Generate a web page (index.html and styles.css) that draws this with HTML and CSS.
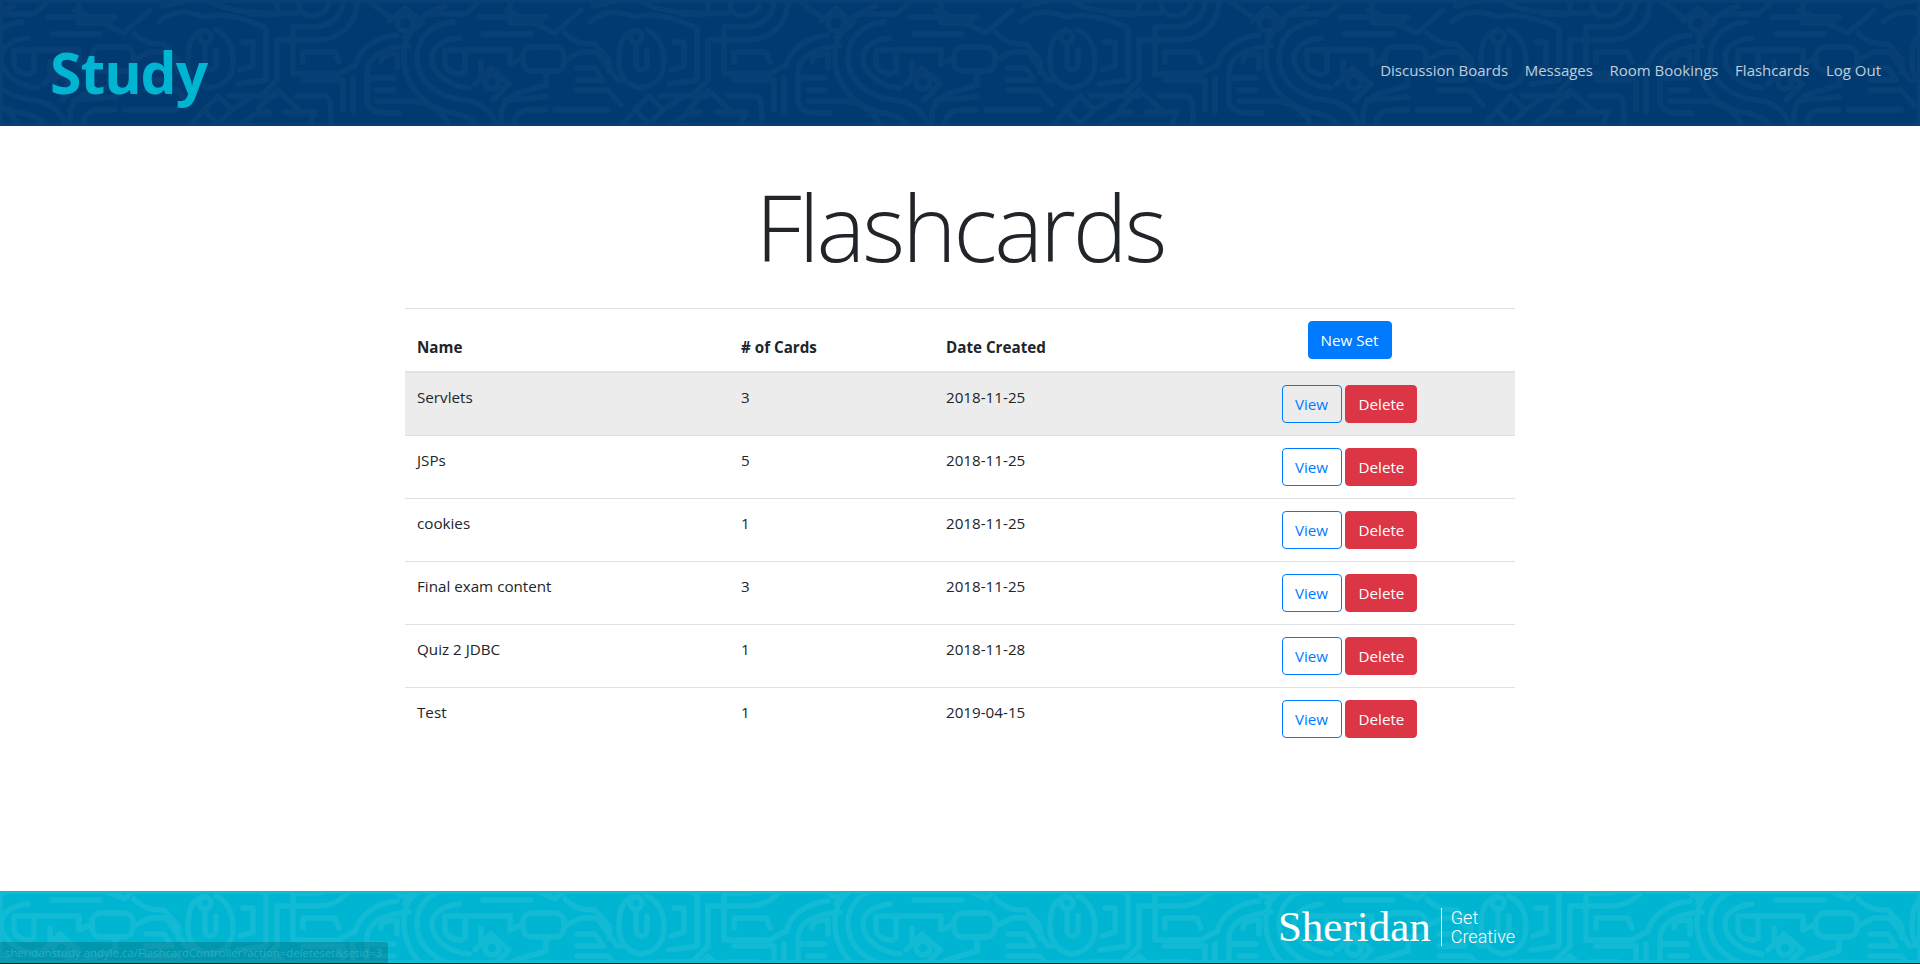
FILE: index.html
```html
<!DOCTYPE html>
<html lang="en">
<head>
    <meta charset="utf-8">
    <title>Flashcards</title>
    <link rel="stylesheet" href="styles.css">
</head>
<body>
    <header class="site_header">
        <svg class="texture texture_header" width="1920" height="126" viewBox="0 0 1920 126" aria-hidden="true">
            <defs>
                <g id="maze_paths">
                    <!-- concentric arcs, top left -->
                    <path d="M88,0 C88,25 70,40 48,40 L8,40 L8,80 L-8,96 L-40,96"/>
                    <path d="M74,0 C74,18 60,27 42,27 L24,27 L24,74 L70,74 L84,66"/>
                    <path d="M60,0 C60,10 52,16 42,16 C34,16 30,10 30,0"/>
                    <path d="M34,62 L34,52 L66,52 L70,62"/>
                    <path d="M8,0 L8,14 L-20,14"/>
                    <!-- ring with diamond -->
                    <circle cx="136" cy="23" r="8"/>
                    <path d="M121,21 L136,8 L153,23 L136,37"/>
                    <path d="M98,0 L122,18"/>
                    <path d="M128,35 C108,37 90,48 86,66"/>
                    <path d="M140,46 C118,48 100,55 98,70 L98,100 C98,108 104,112 115,113 L130,113"/>
                    <path d="M112,62 C112,56 118,54 128,54 L128,68"/>
                    <path d="M100,78 L125,78 M108,90 L125,90"/>
                    <path d="M108,101 L140,101 C160,101 175,112 180,126"/>
                    <!-- big curve -->
                    <path d="M184,22 C160,24 148,40 148,58 C148,82 170,98 195,100 C212,102 224,112 228,126"/>
                    <path d="M190,38 C172,40 163,48 163,58 C163,72 178,86 200,88"/>
                    <path d="M176,6 C150,14 133,35 135,60 C137,90 160,110 185,113 C195,115 205,120 208,126"/>
                    <!-- chevrons, bottom left -->
                    <path d="M-10,108 L8,90 L30,110"/>
                    <path d="M34,80 L74,80 L74,110"/>
                    <path d="M28,96 L56,96 C62,96 62,110 62,126"/>
                    <path d="M84,78 L84,112"/>
                    <path d="M40,126 L46,112 L16,112"/>
                    <!-- boxes, middle -->
                    <path d="M181,50 L241,50 L241,64 M196,50 L196,72 M212,62 L212,74"/>
                    <path d="M176,50 L176,64 C176,70 184,74 192,74"/>
                    <rect x="254" y="47" width="41" height="24" rx="9"/>
                    <path d="M241,64 L254,58"/>
                    <circle cx="223" cy="82" r="7"/>
                    <path d="M206,84 L222,68 L240,84 L224,100"/>
                    <path d="M237,10 L286,33 L312,10"/>
                    <path d="M210,17 L277,17 M241,0 L241,23 L272,23"/>
                    <path d="M212,0 L196,14 L160,14"/>
                    <path d="M214,34 L262,34"/>
                    <path d="M277,71 L277,85 L250,93 C240,96 234,104 232,112 L232,126"/>
                    <path d="M236,100 L277,97"/>
                    <path d="M245,126 C245,116 250,110 262,110 L277,110"/>
                    <path d="M286,110 L339,110 M308,90 L339,90 L352,105"/>
                    <path d="M296,60 L312,52 L328,52 L348,80 L352,80"/>
                    <path d="M296,33 C306,44 318,44 326,44 L340,60 L340,72"/>
                    <path d="M308,68 L326,68 L334,80 L308,80"/>
                    <!-- oval, right -->
                    <path d="M367,30 C352,34 350,46 350,62 C350,78 360,86 372,88 C385,86 395,78 395,62 C395,46 390,36 378,30"/>
                    <circle cx="367" cy="37" r="6"/>
                    <path d="M367,44 L367,64 C367,72 378,72 378,64 L378,50"/>
                    <path d="M321,22 C336,8 352,12 367,17 C385,12 410,20 428,28 L428,80 L400,84"/>
                    <path d="M370,0 C385,10 405,13 431,13 L460,13"/>
                    <path d="M405,42 L415,42 L415,66 L402,70"/>
                    <path d="M325,0 L325,6 L350,0"/>
                    <!-- diamond, bottom right -->
                    <path d="M366,110 L380,96 L394,110 L380,124 Z"/>
                    <path d="M352,126 L366,110 M394,110 L415,96 L438,96"/>
                    <path d="M400,126 L420,112 L431,112"/>
                </g>
                <pattern id="maze" patternUnits="userSpaceOnUse" x="269" y="0" width="431" height="126">
                    <use href="#maze_paths"/>
                    <use href="#maze_paths" x="431"/>
                    <use href="#maze_paths" x="-431"/>
                </pattern>
            </defs>
            <rect width="1920" height="126" fill="url(#maze)"/>
        </svg>
        <a class="brand" href="#">Study</a>
        <nav class="main_nav">
            <a href="#">Discussion Boards</a>
            <a href="#">Messages</a>
            <a href="#">Room Bookings</a>
            <a href="#">Flashcards</a>
            <a href="#">Log Out</a>
        </nav>
    </header>

    <main class="content">
        <h1 class="page_title">Flashcards</h1>
        <table class="sets_table">
            <thead>
                <tr>
                    <th class="col_name">Name</th>
                    <th class="col_cards"># of Cards</th>
                    <th class="col_date">Date Created</th>
                    <th class="col_actions"><a class="btn btn_primary" href="#">New Set</a></th>
                </tr>
            </thead>
            <tbody>
                <tr class="row_hover">
                    <td>Servlets</td>
                    <td>3</td>
                    <td>2018-11-25</td>
                    <td class="col_actions"><a class="btn btn_outline" href="#">View</a> <a class="btn btn_danger" href="#">Delete</a></td>
                </tr>
                <tr>
                    <td>JSPs</td>
                    <td>5</td>
                    <td>2018-11-25</td>
                    <td class="col_actions"><a class="btn btn_outline" href="#">View</a> <a class="btn btn_danger" href="#">Delete</a></td>
                </tr>
                <tr>
                    <td>cookies</td>
                    <td>1</td>
                    <td>2018-11-25</td>
                    <td class="col_actions"><a class="btn btn_outline" href="#">View</a> <a class="btn btn_danger" href="#">Delete</a></td>
                </tr>
                <tr>
                    <td>Final exam content</td>
                    <td>3</td>
                    <td>2018-11-25</td>
                    <td class="col_actions"><a class="btn btn_outline" href="#">View</a> <a class="btn btn_danger" href="#">Delete</a></td>
                </tr>
                <tr>
                    <td>Quiz 2 JDBC</td>
                    <td>1</td>
                    <td>2018-11-28</td>
                    <td class="col_actions"><a class="btn btn_outline" href="#">View</a> <a class="btn btn_danger" href="#">Delete</a></td>
                </tr>
                <tr>
                    <td>Test</td>
                    <td>1</td>
                    <td>2019-04-15</td>
                    <td class="col_actions"><a class="btn btn_outline" href="#">View</a> <a class="btn btn_danger" href="#">Delete</a></td>
                </tr>
            </tbody>
        </table>
    </main>

    <footer class="site_footer">
        <svg class="texture texture_footer" width="1920" height="72" viewBox="0 25 1920 72" aria-hidden="true">
            <rect y="25" width="1920" height="72" fill="url(#maze)"/>
        </svg>
        <div class="footer_inner">
            <div class="logo">
                <span class="logo_name">Sheridan</span>
                <span class="logo_tag">Get<br>Creative</span>
            </div>
        </div>
        <div class="status_bubble">sheridanstudy.andyle.ca/FlashcardController?action=deleteset&amp;setid=3</div>
    </footer>
</body>
</html>
```

FILE: styles.css
```css
* {
    box-sizing: border-box;
}
html, body {
    height: 100%;
}
body {
    margin: 0;
    display: flex;
    flex-direction: column;
    min-height: 964px;
    font-family: "Open Sans", "Noto Sans", sans-serif;
    font-size: 15.2px;
    line-height: 24px;
    color: #212529;
    background: #fff;
}
a {
    text-decoration: none;
}

/* header */
.site_header {
    position: relative;
    display: flex;
    justify-content: space-between;
    align-items: center;
    height: 126px;
    padding: 14px 39px 0 50px;
    background: #003a70;
    overflow: hidden;
}
.texture {
    position: absolute;
    left: 0;
    top: 0;
    fill: none;
    stroke: #fff;
    stroke-width: 5.5;
    stroke-linejoin: round;
    stroke-linecap: round;
}
.texture_header {
    opacity: 0.03;
}
.texture_footer {
    opacity: 0.07;
}
.brand {
    position: relative;
    top: 2px;
    font-size: 57px;
    line-height: 72px;
    font-weight: 700;
    letter-spacing: -1px;
    color: #00b5d1;
}
.main_nav {
    position: relative;
    display: flex;
    gap: 16.6px;
    font-size: 15px;
}
.main_nav a {
    color: rgba(255, 255, 255, 0.75);
}

/* main */
.content {
    flex: 1;
    width: 1110px;
    margin: 0 auto;
}
.page_title {
    margin: 0;
    padding: 43px 0 23px;
    font-size: 92px;
    line-height: 116px;
    font-weight: 300;
    letter-spacing: -3px;
    text-align: center;
}
.sets_table {
    width: 100%;
    border-collapse: collapse;
    table-layout: fixed;
}
.sets_table th,
.sets_table td {
    padding: 12px;
    border-top: 1px solid #dee2e6;
    text-align: left;
    vertical-align: top;
}
.sets_table th {
    vertical-align: bottom;
    border-bottom: 2px solid #dee2e6;
    font-weight: 700;
}
.sets_table .col_actions {
    text-align: center;
}
.col_name {
    width: 324px;
}
.col_cards {
    width: 205px;
}
.col_date {
    width: 250px;
}
.row_hover {
    background: #ececec;
}

/* buttons */
.btn {
    display: inline-block;
    height: 38px;
    padding: 6px 0;
    border: 1px solid transparent;
    border-radius: 4px;
    font-weight: 400;
    text-align: center;
    vertical-align: top;
}
.btn_primary {
    width: 84px;
    color: #fff;
    background: #007bff;
    border-color: #007bff;
}
.btn_danger {
    width: 72px;
    color: #fff;
    background: #dc3545;
    border-color: #dc3545;
}
.btn_outline {
    width: 60px;
    color: #007bff;
    border-color: #007bff;
}

/* footer */
.site_footer {
    position: relative;
    height: 73px;
    background: #00b5d1;
    border-bottom: 1px solid #1a1a1a;
    overflow: hidden;
}
.footer_inner {
    position: relative;
    display: flex;
    justify-content: flex-end;
    width: 1110px;
    height: 72px;
    margin: 0 auto;
}
.logo {
    display: flex;
    align-items: center;
    color: #fff;
}
.logo_name {
    padding-right: 10px;
    font-family: "Liberation Serif", serif;
    font-size: 43px;
    line-height: 40px;
}
.logo_tag {
    padding-left: 9px;
    border-left: 1px solid #fff;
    font-family: Roboto, sans-serif;
    font-size: 18px;
    line-height: 19px;
    font-weight: 300;
}
.status_bubble {
    position: absolute;
    left: 0;
    bottom: 0;
    width: 388px;
    height: 21px;
    padding-left: 5px;
    border-top-right-radius: 2px;
    background: rgba(0, 0, 0, 0.17);
    color: #25aec5;
    font-size: 11.4px;
    line-height: 21px;
    white-space: nowrap;
}
```
